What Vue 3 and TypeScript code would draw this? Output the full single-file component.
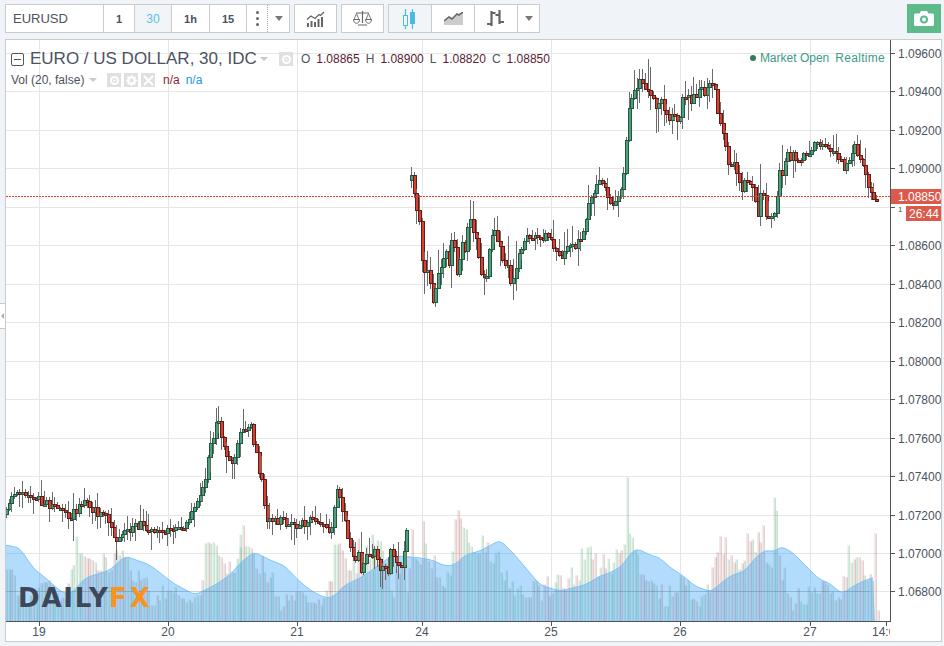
<script setup lang="ts">
type P = [number, number]
let seed = 20177
const rnd = (): number => {
  seed = (seed * 16807) % 2147483647
  return (seed - 1) / 2147483646
}
const lerp = (pts: P[], x: number): number => {
  if (x <= pts[0][0]) return pts[0][1]
  for (let i = 1; i < pts.length; i++) {
    if (x <= pts[i][0]) {
      const [a, b] = pts[i - 1]
      const [c, d] = pts[i]
      return b + ((d - b) * (x - a)) / (c - a)
    }
  }
  return pts[pts.length - 1][1]
}
const seg1: P[] = [[6,512],[10,492],[20,490],[30,496],[40,500],[50,505],[60,511],[70,516],[80,506],[85,496],[92,510],[100,512],[110,522],[115,542],[125,530],[140,525],[155,528],[170,532],[185,526],[195,506],[205,480],[209,450],[212,440],[217,416],[222,440],[225,452],[232,468],[237,440],[240,432],[250,422],[255,450],[258,470],[262,480],[265,516],[280,521],[295,526],[315,520],[330,530],[334,505],[337,488],[341,510],[345,520],[348,545],[352,548],[354,573],[358,548],[361,573],[365,555],[372,555],[376,548],[378,578],[381,560],[384,566],[388,574],[390,548],[393,555],[396,565],[402,565],[404,548],[406,538],[409,507]]
const seg2: P[] = [[411,178],[413,194],[415,199],[417,221],[420,221],[423,280],[426,265],[428,270],[430,284],[433,310],[435,285],[439,268],[442,272],[445,248],[449,262],[452,231],[457,277],[462,242],[465,250],[468,225],[471,219],[473,232],[477,248],[481,279],[487,280],[489,250],[492,228],[495,235],[498,240],[500,248],[504,268],[508,262],[511,283],[515,268],[525,236],[545,235],[560,256],[580,240],[590,200],[600,180],[610,205],[620,190],[624,170],[627,120],[630,105],[634,90],[640,78],[644,90],[650,92],[653,100],[656,105],[660,96],[664,115],[668,118],[672,110],[675,120],[680,118],[682,95],[690,100],[697,95],[702,88],[705,92],[710,80],[713,80],[716,100],[718,120],[722,128],[725,145],[728,160],[733,165],[736,168],[740,192],[745,180],[750,180],[754,195],[758,215],[762,181],[765,215],[770,218],[775,215],[778,172],[782,175],[786,155],[790,156],[805,156],[815,146],[830,150],[845,168],[855,146],[865,176],[872,195],[876,197]]
const maPts: P[] = [[6,545],[20,548],[33,568],[48,580],[60,591],[70,595],[85,578],[110,570],[125,556],[150,565],[173,583],[195,595],[215,585],[230,575],[240,563],[254,552],[270,560],[285,566],[298,580],[310,590],[323,597],[332,598],[345,585],[360,578],[375,568],[390,557],[400,556],[420,558],[432,560],[445,566],[455,565],[465,555],[480,551],[500,540],[515,555],[540,585],[560,591],[585,585],[600,576],[612,572],[623,565],[632,551],[638,549],[650,555],[660,558],[672,569],[682,575],[695,586],[711,592],[722,582],[732,575],[745,571],[755,558],[765,550],[775,552],[780,546],[792,552],[805,565],[820,580],[828,582],[842,594],[855,585],[866,580],[875,577]]
const ma: P[] = []
for (let x = 6; x <= 875; x += 3) {
  let s = 0
  for (let k = -2; k <= 2; k++) s += lerp(maPts, x + k * 2)
  ma.push([x, s / 5])
}
const areaPath = 'M6 621L' + ma.map((p) => `${p[0]} ${p[1].toFixed(1)}`).join('L') + 'L875 621Z'
const maLine = 'M' + ma.map((p) => `${p[0]} ${p[1].toFixed(1)}`).join('L')

interface Candle { x: number; top: number; bot: number; hi: number; lo: number; up: boolean }
const candles: Candle[] = []
const build = (pts: P[], x0: number, x1: number, amp: number) => {
  let prev = lerp(pts, x0) + 2
  for (let x = x0; x <= x1; x += 2.6875) {
    const long = (x > 416 && x < 520) || (x > 620 && x < 790) ? 1.6 : 1.1
    const close = lerp(pts, x) + (rnd() - 0.5) * amp
    const open = prev
    const top = Math.min(open, close)
    const bot = Math.max(open, close)
    const hi = top - 1 - rnd() * rnd() * 20 * long
    const lo = bot + 1 + rnd() * rnd() * 20 * long
    candles.push({ x: Math.round(x), top: Math.round(top), bot: Math.max(Math.round(bot), Math.round(top) + 2), hi: Math.round(hi), lo: Math.round(lo), up: close < open })
    prev = close
  }
}
build(seg1, 6, 409, 9)
build(seg2, 411, 876, 9)

// volume: tops as read off the picture; a negative value is a falling (pink) bar
const volA = [118,118,-118,135,195,-195,205,225,-225,195,-195,180,170,-160,155,-155,-150,165,180,190,210,-200,205,-160,118,105,18,68,68,-78,-85,-85,-90,97,-120,-120,70,-82,125,-120,-70,60,-75,60,-80,80,-120,150,-155,120,-150,145,-140,180,-225,225,-195,210,165,-205,180,-180,185,170,-195,205,-205,215,208,-215,200,195,195,-150,40,-36,38,36,44,75,-82,-100,130,-93,125,125,85,50]
const volB = [193,-165,228,228,-235,245,-295,310,-255,305,-335,320,305,-378,378,420,-408,-373,390,-375,390,-362,362,-365,375,-395,395,-395,400,-388,405,-385,360,-333,-332,222,222,-218,-240,-265,300,-300,220,-310,-205,-310,260,225,-265,192,230,210,213,240,-280,300,360,380,-300,310,-290,290,365,-295,-178,265,270,-282,-152,218,-272,295,-255,-322,322,345,-350,305,315,243,-148,-120,-145,172,178,215,228,245,250,-250]
const volC = [292,-252,-295,265,310,276,238,-250,-240,222,22,190,202,240,252,-312,-312,-330,-333,330,-340,345,-383,-342,408,408,345,-378,-367,-365,316,-322,-345,330,388,-385,-393,408,378,-372,342,-365,-292,-262,-246,-198,-252,-202,267,-255,-277,267,-298,-280,270,-190,-213,207,-245,-186,-216,-166,276,282,-292,82,120,-255,-330,292,-370,-380,420,-400,-355,393,402,402,348,-365,352,370,370,-333,-333,342,-368,362,-390,382,-388,-318,-322,226,277,-267,262,-262,-270,316,330,-312,330,-190,-420]
interface Bar { x: number; y: number; up: boolean }
const bars: Bar[] = []
volA.forEach((v, i) => bars.push({ x: Math.round(6 + i * 2.6875), y: Math.round(530 + Math.abs(v) / 3), up: v > 0 }))
volB.forEach((v, i) => bars.push({ x: Math.round(240 + i * 2.6875), y: Math.round(470 + Math.abs(v) / 3), up: v > 0 }))
for (let x = 482; x < 600; x += 2.6875) {
  let y = lerp(maPts, x + 24) + (rnd() - 0.5) * 26
  if (Math.abs(x - 588) < 8) y = 545 + rnd() * 14
  bars.push({ x: Math.round(x), y: Math.round(y), up: rnd() > 0.5 })
}
volC.forEach((v, i) => bars.push({ x: Math.round(600 + i * 2.67), y: Math.round(470 + Math.abs(v) / 3), up: v > 0 }))

const prices = ['1.09600','1.09400','1.09200','1.09000','1.08600','1.08400','1.08200','1.08000','1.07800','1.07600','1.07400','1.07200','1.07000','1.06800']
  .map((t) => {
    const i = Math.round((1.096 - Number(t)) / 0.002)
    return { t, y: Math.round(53 + i * 38.46) + 0.5 }
  })
const gridY = [...prices.map((p) => p.y), 207.5]
const days = [['19',39],['20',168],['21',297],['24',422],['25',551],['26',680],['27',810]] as [string, number][]
const intervals = [
  { t: '1', w: 31, on: false },
  { t: '30', w: 37, on: true },
  { t: '1h', w: 38, on: false },
  { t: '15', w: 37, on: false },
]
</script>

<template>
  <div class="page">
    <header class="toolbar">
      <div class="group">
        <div class="symbol">EURUSD</div>
        <div v-for="b in intervals" :key="b.t" class="cell" :class="{ active: b.on }" :style="{ width: b.w + 'px' }">{{ b.t }}</div>
        <div class="cell dots"><i></i><i></i><i></i></div>
        <div class="cell caretcell"><span class="caret"></span></div>
      </div>
      <div class="group">
        <div class="cell tool">
          <svg width="19" height="16" viewBox="0 0 19 16"><path d="M1 12h2v4H1zM4.500 10h2v6h-2zM8 11h2v5H8zM11.500 8h2v8h-2zM15 6h2v10h-2z" fill="#666"/><path d="M1 8.500L5 5l4 2.500 4-4 1.500 1L18 1" fill="none" stroke="#666" stroke-width="1.300"/></svg>
        </div>
      </div>
      <div class="group">
        <div class="cell tool">
          <svg width="19" height="15" viewBox="0 0 19 15"><path d="M9.500 0v12M5 14h9M3 2h13" stroke="#666" stroke-width="1.200" fill="none"/><path d="M1 8.500L3.500 2.500 6 8.500M13 8.500L15.500 2.500 18 8.500" stroke="#777" fill="none"/><path d="M.5 8.500h6c0 5-6 5-6 0zM12.500 8.500h6c0 5-6 5-6 0z" fill="#fff" stroke="#666"/></svg>
        </div>
      </div>
      <div class="group">
        <div class="cell tool active">
          <svg width="14" height="20" viewBox="0 0 14 20"><path d="M2.500 0v20M9.500 0v20" stroke="#4ab9e3" stroke-width="1.200"/><rect x=".5" y="6.500" width="4" height="10" fill="#f2f5f8" stroke="#4ab9e3"/><rect x="7" y="3" width="5" height="12" fill="#4ab9e3"/></svg>
        </div>
        <div class="cell tool">
          <svg width="19" height="13" viewBox="0 0 19 13"><path d="M0 9l5-4 3 2 5-5 2 1 4-3v13H0z" fill="#ccc"/><path d="M0 9l5-4 3 2 5-5 2 1 4-3" fill="none" stroke="#666" stroke-width="1.600"/></svg>
        </div>
        <div class="cell tool">
          <svg width="18" height="17" viewBox="0 0 18 17"><path d="M4.500 1v15M12.500 0v14M0 14h4.500M4.500 3h4M8.500 5h4M12.500 12H17" stroke="#666" stroke-width="2.200" fill="none"/></svg>
        </div>
        <div class="cell caretcell"><span class="caret"></span></div>
      </div>
      <button class="camera" aria-label="Snapshot">
        <svg width="20" height="15" viewBox="0 0 20 15"><path d="M1.500 2.500h4L7 0h6l1.500 2.500h4q1.500 0 1.500 1.500v9.500q0 1.500-1.500 1.500h-17Q0 15 0 13.500V4q0-1.500 1.500-1.500z" fill="#fff"/><circle cx="10" cy="8.500" r="4" fill="#5cba8b"/><circle cx="10" cy="8.500" r="2" fill="#fff"/></svg>
      </button>
    </header>

    <div class="tab"><span></span></div>

    <main class="chart">
      <svg class="canvas" width="935" height="601" viewBox="6 40 935 601">
        <g stroke="#e6e6e6" stroke-width="1" shape-rendering="crispEdges">
          <path v-for="y in gridY" :key="y" :d="`M6 ${y}H890`"/>
          <path v-for="d in days" :key="d[0]" :d="`M${d[1] + 0.5} 40V621`"/>
        </g>

        <g shape-rendering="crispEdges">
          <rect v-for="(b, i) in bars" :key="'v' + i" :x="b.x - 0.5" :y="b.y + 0.5" width="2" :height="621 - b.y"
            :fill="b.up ? 'rgba(107,175,131,0.26)' : 'rgba(170,90,90,0.19)'"
            :stroke="b.up ? 'rgba(107,175,131,0.12)' : 'rgba(160,90,90,0.12)'"/>
        </g>
        <path :d="areaPath" fill="rgba(33,150,243,0.34)"/>
        <path :d="maLine" fill="none" stroke="rgba(120,195,250,0.9)" stroke-width="1"/>
        <path d="M6 591.500H870" stroke="rgba(0,0,0,0.1)" shape-rendering="crispEdges"/>

        <g shape-rendering="crispEdges">
          <template v-for="(c, i) in candles" :key="'c' + i">
            <path :d="`M${c.x + 0.5} ${c.hi}V${c.lo}`" stroke="#6b6b6b" stroke-width="1"/>
            <rect :x="c.x - 0.5" :y="c.top + 0.5" width="3" :height="c.bot - c.top"
              :fill="c.up ? '#4f9f7c' : '#d8402f'" :stroke="c.up ? '#1f5a40' : '#5d1c18'"/>
          </template>
        </g>

        <path d="M6 196.500H890" stroke="#d9402f" stroke-width="1" stroke-dasharray="2 1" shape-rendering="crispEdges"/>

        <g stroke="#50535a" stroke-width="1" shape-rendering="crispEdges">
          <path d="M6 621.500H891M890.500 40V622"/>
          <path v-for="y in gridY" :key="'t' + y" :d="`M891 ${y}H895`"/>
          <path v-for="d in days" :key="'d' + d[0]" :d="`M${d[1] + 0.5} 622V626`"/>
          <path d="M886.500 622V626"/>
        </g>

        <text v-for="p in prices" :key="'l' + p.t" x="898" :y="p.y + 4" class="axis">{{ p.t }}</text>
        <text x="898" y="212" class="axis stub">1</text>
        <text v-for="d in days" :key="'dl' + d[0]" :x="d[1]" y="636" text-anchor="middle" class="axis">{{ d[0] }}</text>
        <svg x="868" y="622" width="22" height="19" viewBox="868 622 22 19"><text x="872" y="636" class="axis">14:00</text></svg>

        <rect x="891" y="189" width="50" height="15" fill="#dc5a4b"/>
        <text x="898" y="201" class="axis tag">1.08850</text>
        <rect x="906" y="206" width="35" height="15" fill="#dc5a4b"/>
        <text x="909" y="218" class="axis tag">26:44</text>

        <text x="18" y="606.500" class="logo daily">DAILY</text>
        <text x="109" y="606.500" class="logo fx">FX</text>
      </svg>

      <div class="legend">
        <div class="row first">
          <span class="collapse"></span>
          <span class="title">EURO / US DOLLAR, 30, IDC</span>
          <span class="mini-caret"></span>
          <span class="chip eye-chip"><svg width="11" height="11" viewBox="0 0 11 11"><circle cx="5.500" cy="5.500" r="4.500" fill="#fff"/><circle cx="5.500" cy="5.500" r="2.500" fill="#e0e0e0"/><circle cx="5.500" cy="5.500" r="1.100" fill="#fff"/></svg></span>
          <span class="ohlc">
            <b>O</b><em>1.08865</em><b>H</b><em>1.08900</em><b>L</b><em>1.08820</em><b>C</b><em>1.08850</em>
          </span>
        </div>
        <div class="row second">
          <span class="vol">Vol (20, false)</span>
          <span class="mini-caret"></span>
          <span class="chips">
            <span class="chip"><svg width="11" height="11" viewBox="0 0 11 11"><circle cx="5.500" cy="5.500" r="4.500" fill="#fff"/><circle cx="5.500" cy="5.500" r="2.500" fill="#e0e0e0"/><circle cx="5.500" cy="5.500" r="1.100" fill="#fff"/></svg></span>
            <span class="chip"><svg width="11" height="11" viewBox="0 0 11 11"><circle cx="5.500" cy="5.500" r="3.300" fill="none" stroke="#fff" stroke-width="2.400"/><path d="M5.500 0v2M5.500 9v2M0 5.500h2M9 5.500h2M1.600 1.600l1.400 1.400M8 8l1.400 1.400M9.400 1.600L8 3M3 8L1.600 9.400" stroke="#fff" stroke-width="1.500"/></svg></span>
            <span class="chip"><svg width="11" height="11" viewBox="0 0 11 11"><path d="M1 1l9 9M10 1l-9 9" stroke="#fff" stroke-width="2"/></svg></span>
          </span>
          <span class="na red">n/a</span>
          <span class="na blue">n/a</span>
        </div>
      </div>

      <div class="status"><span class="dot"></span><span>Market Open</span><span class="rt">Realtime</span></div>
    </main>
  </div>
</template>

<style scoped>
.page {
  width: 944px;
  height: 646px;
  background: #f0f3f7;
  position: relative;
  overflow: hidden;
  font-family: "Liberation Sans", Arial, sans-serif;
  color: #4c525e;
}
.toolbar {
  display: flex;
  height: 29px;
  padding: 4px 3px 0 5px;
  gap: 4px;
}
.group {
  display: flex;
  height: 29px;
  box-sizing: border-box;
  background: #fff;
  border: 1px solid #c9cbcd;
}
.symbol {
  width: 98px;
  box-sizing: border-box;
  padding-left: 7px;
  font-size: 13px;
  line-height: 27px;
  border-right: 1px solid #c9cbcd;
}
.cell {
  box-sizing: border-box;
  display: flex;
  align-items: center;
  justify-content: center;
  font-size: 11px;
  font-weight: bold;
  color: #4c525e;
  border-right: 1px solid #c9cbcd;
}
.cell:last-child {
  border-right: none;
}
.cell.active {
  background: #f1f5f8;
  color: #5dbde6;
  font-weight: normal;
  font-size: 12px;
}
.dots {
  width: 21px;
  flex-direction: column;
  gap: 3px;
  border-right: 1px dotted #aaa;
}
.dots i {
  width: 3px;
  height: 3px;
  border-radius: 50%;
  background: #666;
}
.caretcell {
  width: 21px;
}
.caret {
  border-left: 4.500px solid transparent;
  border-right: 4.500px solid transparent;
  border-top: 5px solid #787878;
}
.tool {
  width: 43px;
}
.group:nth-child(2) .tool,
.group:nth-child(3) .tool {
  width: 41px;
  border-right: none;
}
.camera {
  margin-left: auto;
  width: 34px;
  height: 29px;
  border: none;
  padding: 0;
  background: #5cba8b;
  display: flex;
  align-items: center;
  justify-content: center;
}
.tab {
  position: absolute;
  left: 0;
  top: 303px;
  width: 5px;
  height: 26px;
  box-sizing: border-box;
  background: #fff;
  border-top: 1px solid #c9cbcd;
  border-bottom: 1px solid #c9cbcd;
  display: flex;
  align-items: center;
  justify-content: center;
}
.tab span {
  border-top: 3px solid transparent;
  border-bottom: 3px solid transparent;
  border-right: 3px solid #aaa;
}
.chart {
  position: relative;
  box-sizing: border-box;
  margin: 6px 0 0 5px;
  width: 937px;
  height: 603px;
  background: #fff;
  border: 1px solid #c9cbcd;
}
.canvas {
  display: block;
}
.axis {
  font-family: "Liberation Sans", Arial, sans-serif;
  font-size: 12px;
  fill: #4c525e;
}
.stub {
  font-size: 8px;
}
.tag {
  fill: #fff;
}
.logo {
  font-family: "DejaVu Sans", sans-serif;
  font-weight: bold;
  font-size: 26px;
  letter-spacing: 1.800px;
}
.daily {
  fill: #3d4757;
}
.fx {
  fill: #f7931e;
  letter-spacing: 3px;
}
.legend {
  position: absolute;
  left: 5px;
  top: 11px;
  right: 60px;
}
.row {
  display: flex;
  align-items: center;
}
.first {
  height: 16px;
}
.second {
  height: 16px;
  margin-top: 5px;
  font-size: 12px;
}
.collapse {
  width: 13px;
  height: 13px;
  box-sizing: border-box;
  border: 1px solid #555;
  border-radius: 2px;
  position: relative;
  margin-right: 6px;
}
.collapse::after {
  content: "";
  position: absolute;
  left: 2px;
  right: 2px;
  top: 5px;
  height: 1px;
  background: #555;
}
.title {
  font-size: 17px;
  width: 226px;
  white-space: nowrap;
}
.mini-caret {
  width: 0;
  margin-left: 4px;
  border-left: 4px solid transparent;
  border-right: 4px solid transparent;
  border-top: 4px solid #c9c9c9;
}
.chip {
  width: 14px;
  height: 14px;
  background: #e0e0e0;
  display: flex;
  align-items: center;
  justify-content: center;
}
.eye-chip {
  margin-left: 11px;
  margin-right: 8px;
}
.ohlc {
  font-size: 12px;
  display: flex;
}
.ohlc b {
  font-weight: normal;
  color: #4c525e;
  margin-right: 6px;
}
.ohlc em {
  font-style: normal;
  color: #5a2030;
  margin-right: 6px;
}
.vol {
  width: 74px;
  white-space: nowrap;
}
.chips {
  display: flex;
  gap: 3px;
  margin-left: 10px;
  margin-right: 8px;
}
.na {
  margin-right: 6px;
}
.red {
  color: #8a1a3a;
}
.blue {
  color: #2196f3;
}
.status {
  position: absolute;
  right: 56px;
  top: 11px;
  height: 14px;
  display: flex;
  align-items: center;
  font-size: 12px;
  color: #3d9a86;
}
.dot {
  width: 6px;
  height: 6px;
  border-radius: 50%;
  background: #2e7d5b;
  margin-right: 4px;
}
.rt {
  margin-left: 6px;
  letter-spacing: 0.300px;
}
</style>

<style>
html,
body {
  margin: 0;
  background: #f0f3f7;
}
</style>
